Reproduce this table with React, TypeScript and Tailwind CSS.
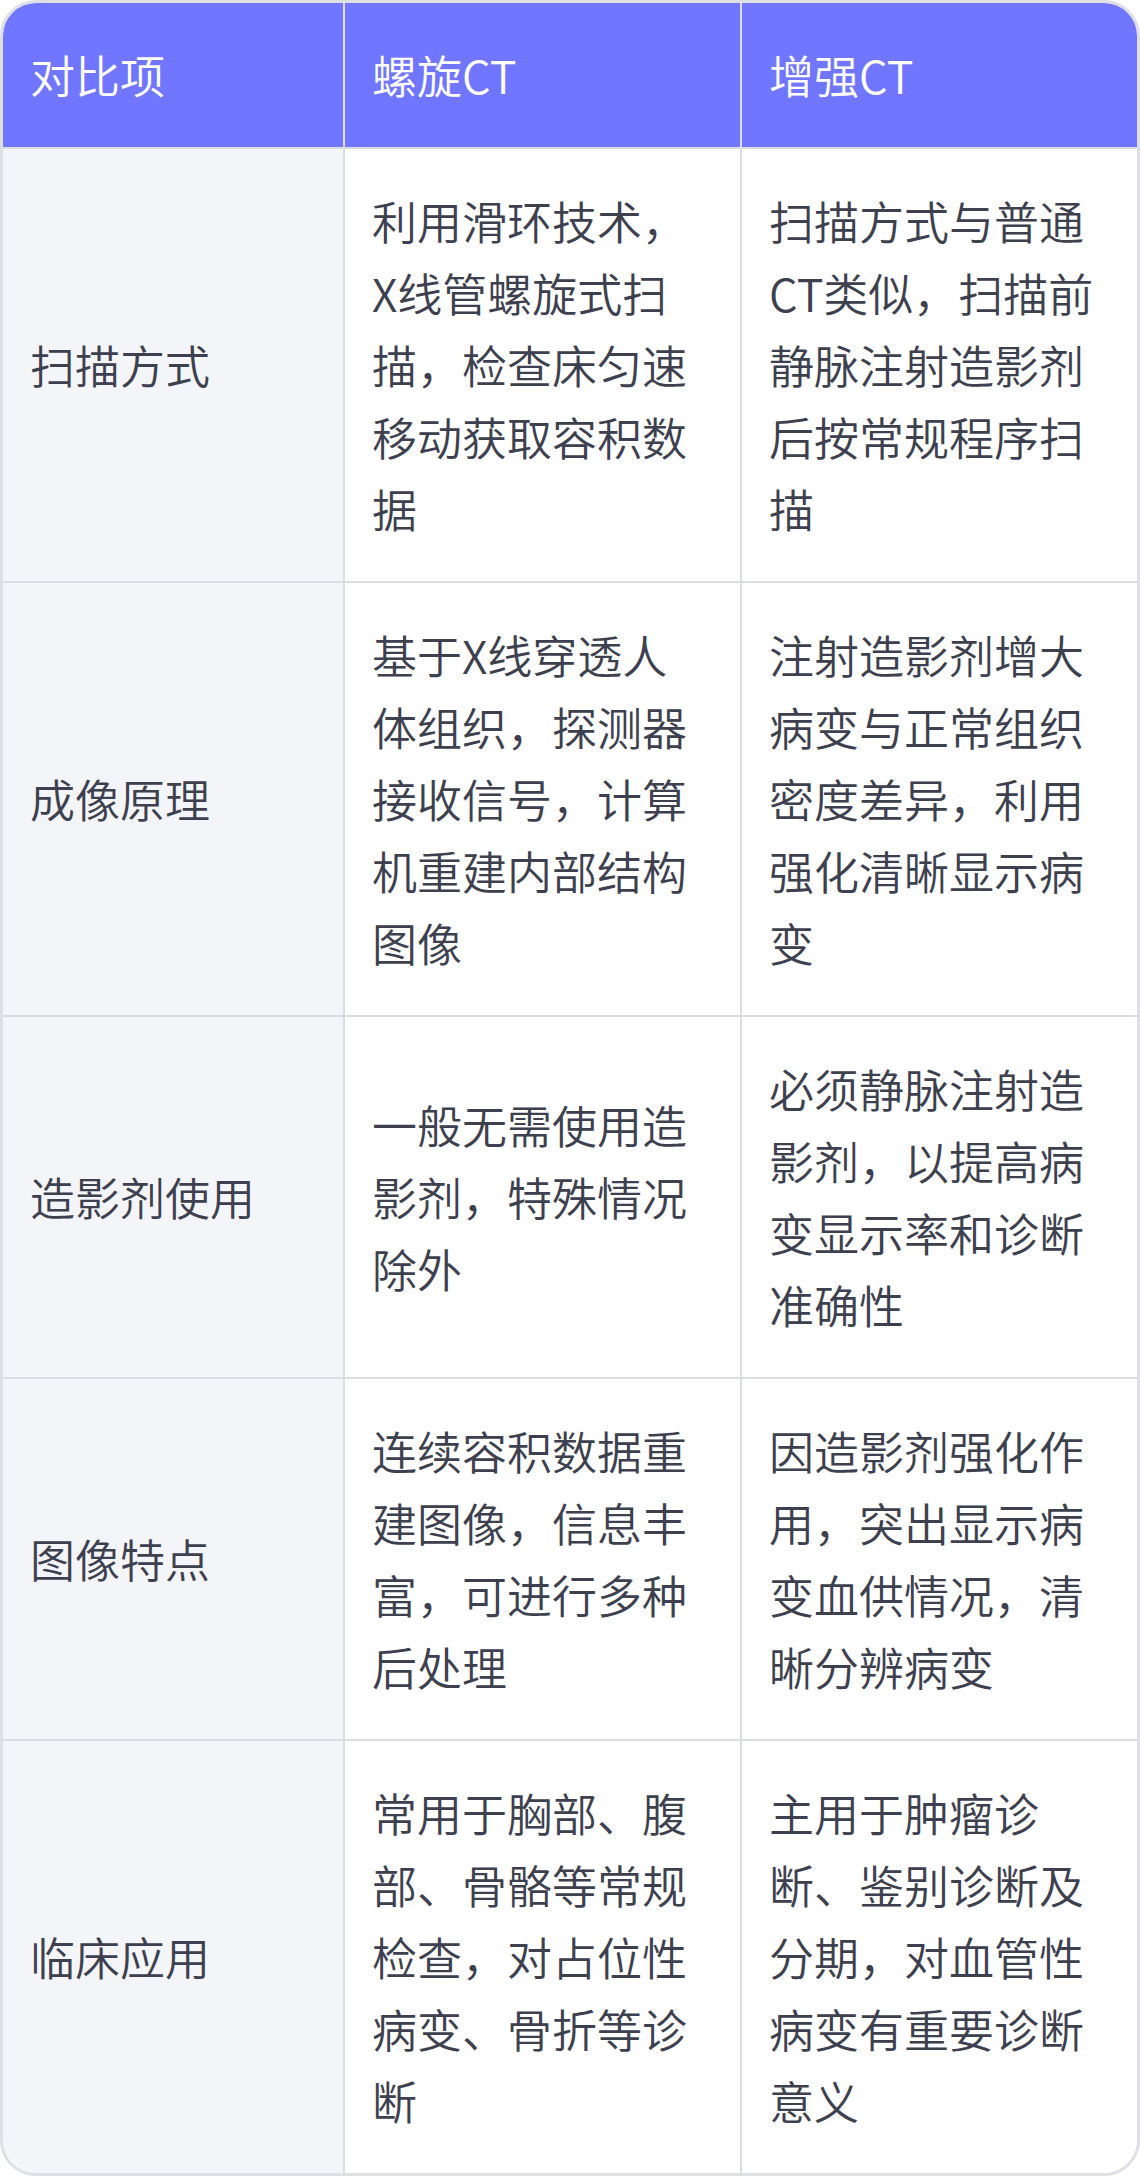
const rows = [
  {
    item: "扫描方式",
    spiral: "利用滑环技术，X线管螺旋式扫描，检查床匀速移动获取容积数据",
    enhanced: "扫描方式与普通CT类似，扫描前静脉注射造影剂后按常规程序扫描",
  },
  {
    item: "成像原理",
    spiral: "基于X线穿透人体组织，探测器接收信号，计算机重建内部结构图像",
    enhanced: "注射造影剂增大病变与正常组织密度差异，利用强化清晰显示病变",
  },
  {
    item: "造影剂使用",
    spiral: "一般无需使用造影剂，特殊情况除外",
    enhanced: "必须静脉注射造影剂，以提高病变显示率和诊断准确性",
  },
  {
    item: "图像特点",
    spiral: "连续容积数据重建图像，信息丰富，可进行多种后处理",
    enhanced: "因造影剂强化作用，突出显示病变血供情况，清晰分辨病变",
  },
  {
    item: "临床应用",
    spiral: "常用于胸部、腹部、骨骼等常规检查，对占位性病变、骨折等诊断",
    enhanced: "主用于肿瘤诊断、鉴别诊断及分期，对血管性病变有重要诊断意义",
  },
];

const App = () => {
  return (
    <div
      className="w-[1140px] min-h-[2176px] bg-white"
      style={{
        fontFamily:
          '"Noto Sans CJK SC DemiLight", "Noto Sans CJK SC Light", "Noto Sans CJK SC", "Noto Sans", sans-serif',
      }}
    >
      <div className="rounded-[36px] border-[3px] border-[#dfe0e5] overflow-hidden">
        <div className="grid grid-cols-[342px_397px_395px] text-[45px] leading-[72px] font-light">
          {/* header */}
          <div className="bg-[#7076ff] text-white pl-[27px] pr-[30px] py-[36px] border-r-2 border-b-2 border-[#dcdde2]">
            对比项
          </div>
          <div className="bg-[#7076ff] text-white pl-[27px] pr-[30px] py-[36px] border-r-2 border-b-2 border-[#dcdde2]">
            螺旋CT
          </div>
          <div className="bg-[#7076ff] text-white pl-[27px] pr-[30px] py-[36px] border-b-2 border-[#dcdde2]">
            增强CT
          </div>

          {rows.map((row, i) => {
            const last = i === rows.length - 1;
            return (
              <div key={row.item} className="contents">
                <div
                  className={`flex items-center bg-[#f4f5f9] text-[#3d404e] pl-[27px] pr-[30px] py-[36px] border-r-2 border-[#dcdde2] ${
                    last ? "" : "border-b-2"
                  }`}
                >
                  {row.item}
                </div>
                <div
                  className={`flex items-center bg-white text-[#3d404e] pl-[27px] pr-[30px] py-[36px] border-r-2 border-[#dcdde2] ${
                    last ? "" : "border-b-2"
                  }`}
                >
                  <p>{row.spiral}</p>
                </div>
                <div
                  className={`flex items-center bg-white text-[#3d404e] pl-[27px] pr-[30px] py-[36px] border-[#dcdde2] ${
                    last ? "" : "border-b-2"
                  }`}
                >
                  <p>{row.enhanced}</p>
                </div>
              </div>
            );
          })}
        </div>
      </div>
    </div>
  );
};

export default App;
